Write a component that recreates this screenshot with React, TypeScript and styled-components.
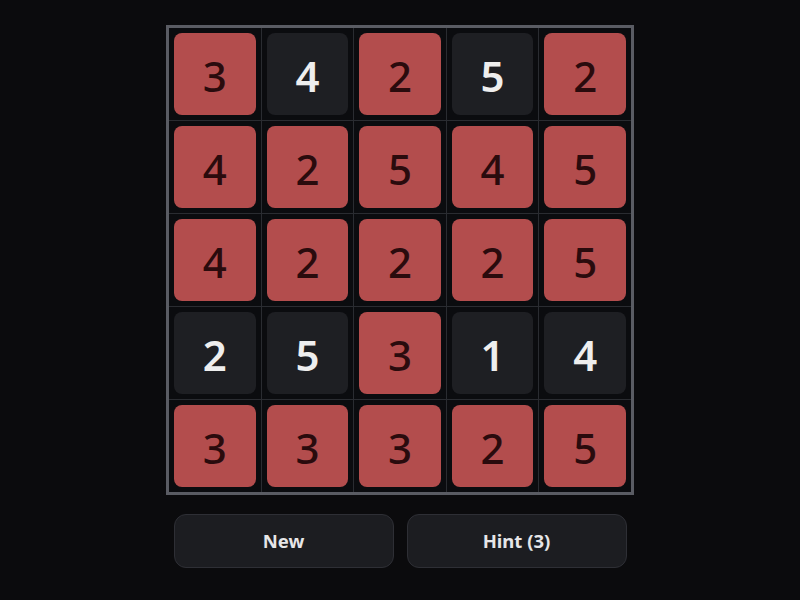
import React from "react";
import styled, { createGlobalStyle } from "styled-components";

const Global = createGlobalStyle`
  html, body { margin: 0; padding: 0; background: #0b0b0d; }
  body { font-family: "Noto Sans", "Open Sans", sans-serif; }
`;

const Page = styled.div`
  width: 800px;
  height: 600px;
  display: flex;
  flex-direction: column;
  align-items: center;
  padding-top: 25px;
  box-sizing: border-box;
`;

const Board = styled.div`
  width: 468px;
  box-sizing: border-box;
  border: 3px solid #5a5c63;
  background: #2a2c31;
  display: grid;
  grid-template-columns: repeat(5, 1fr);
  grid-auto-rows: 92px;
  gap: 1px;
`;

const Cell = styled.div`
  background: #0b0c0f;
  padding: 5px;
  display: flex;
`;

const Tile = styled.div<{ $shaded: boolean }>`
  flex: 1;
  border-radius: 8px;
  display: flex;
  align-items: center;
  justify-content: center;
  font-size: 42px;
  line-height: 1;
  background: ${(p) => (p.$shaded ? "#b34d4d" : "#1e1f23")};
  color: ${(p) => (p.$shaded ? "#2a0b0d" : "#eeeeee")};
  font-weight: ${(p) => (p.$shaded ? 500 : 600)};
  padding-top: 3px;
`;

const Controls = styled.div`
  width: 453px;
  margin-top: 19px;
  display: grid;
  grid-template-columns: 1fr 1fr;
  gap: 13px;
`;

const Button = styled.button`
  height: 54px;
  border-radius: 12px;
  border: 1.5px solid #2e2f35;
  background: #1c1d21;
  color: #e6e6e8;
  font-family: "Noto Sans", "Open Sans", sans-serif;
  font-weight: 700;
  font-size: 18.5px;
  padding: 0 0 2px;
  cursor: pointer;
`;

const grid: [number, boolean][][] = [
  [[3, true], [4, false], [2, true], [5, false], [2, true]],
  [[4, true], [2, true], [5, true], [4, true], [5, true]],
  [[4, true], [2, true], [2, true], [2, true], [5, true]],
  [[2, false], [5, false], [3, true], [1, false], [4, false]],
  [[3, true], [3, true], [3, true], [2, true], [5, true]],
];

export default function App() {
  return (
    <>
      <Global />
      <Page>
        <Board>
          {grid.flatMap((row, r) =>
            row.map(([n, shaded], c) => (
              <Cell key={`${r}-${c}`}>
                <Tile $shaded={shaded}>{n}</Tile>
              </Cell>
            ))
          )}
        </Board>
        <Controls>
          <Button>New</Button>
          <Button>Hint (3)</Button>
        </Controls>
      </Page>
    </>
  );
}
